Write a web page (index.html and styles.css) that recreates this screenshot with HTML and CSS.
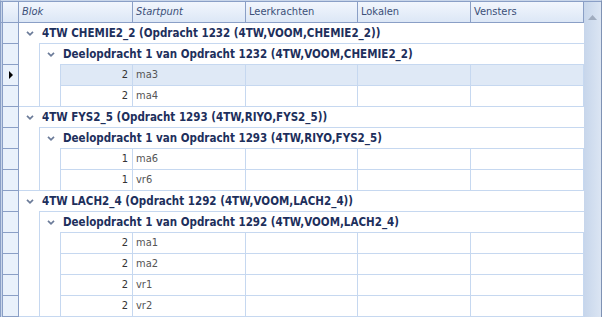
FILE: index.html
```html
<!DOCTYPE html>
<html lang="nl">
<head>
  <meta charset="UTF-8" />
  <title>Blokken</title>
  <link rel="stylesheet" href="styles.css">
</head>
<body>
  <div class="grid">
    <div class="main">
      <div class="head">
        <div class="hd ind"></div>
        <div class="hd c1 it">Blok</div>
        <div class="hd c2 it">Startpunt</div>
        <div class="hd c3">Leerkrachten</div>
        <div class="hd c4">Lokalen</div>
        <div class="hd c5">Vensters</div>
      </div>

      <div class="body">
        <div class="indicators">
          <div class="ic"></div>
          <div class="ic"></div>
          <div class="ic"><span class="arrow"></span></div>
          <div class="ic"></div>
          <div class="ic"></div>
          <div class="ic"></div>
          <div class="ic"></div>
          <div class="ic"></div>
          <div class="ic"></div>
          <div class="ic"></div>
          <div class="ic"></div>
          <div class="ic"></div>
          <div class="ic"></div>
          <div class="ic"></div>
        </div>

        <div class="rows">
          <div class="group">
            <div class="grow l1">
              <svg class="chev" width="8" height="5" viewBox="0 0 8 5"><polyline points="1,0.8 4,3.8 7,0.8" /></svg>
              <span>4TW CHEMIE2_2 (Opdracht 1232 (4TW,VOOM,CHEMIE2_2))</span>
            </div>
            <div class="sub">
              <div class="grow l2">
                <svg class="chev" width="8" height="5" viewBox="0 0 8 5"><polyline points="1,0.8 4,3.8 7,0.8" /></svg>
                <span>Deelopdracht 1 van Opdracht 1232 (4TW,VOOM,CHEMIE2_2)</span>
              </div>
              <div class="data">
                <div class="row sel">
                  <div class="c c1 num">2</div><div class="c c2">ma3</div><div class="c c3"></div><div class="c c4"></div><div class="c c5"></div>
                </div>
                <div class="row">
                  <div class="c c1 num">2</div><div class="c c2">ma4</div><div class="c c3"></div><div class="c c4"></div><div class="c c5"></div>
                </div>
              </div>
            </div>
          </div>

          <div class="group">
            <div class="grow l1">
              <svg class="chev" width="8" height="5" viewBox="0 0 8 5"><polyline points="1,0.8 4,3.8 7,0.8" /></svg>
              <span>4TW FYS2_5 (Opdracht 1293 (4TW,RIYO,FYS2_5))</span>
            </div>
            <div class="sub">
              <div class="grow l2">
                <svg class="chev" width="8" height="5" viewBox="0 0 8 5"><polyline points="1,0.8 4,3.8 7,0.8" /></svg>
                <span>Deelopdracht 1 van Opdracht 1293 (4TW,RIYO,FYS2_5)</span>
              </div>
              <div class="data">
                <div class="row">
                  <div class="c c1 num">1</div><div class="c c2">ma6</div><div class="c c3"></div><div class="c c4"></div><div class="c c5"></div>
                </div>
                <div class="row">
                  <div class="c c1 num">1</div><div class="c c2">vr6</div><div class="c c3"></div><div class="c c4"></div><div class="c c5"></div>
                </div>
              </div>
            </div>
          </div>

          <div class="group">
            <div class="grow l1">
              <svg class="chev" width="8" height="5" viewBox="0 0 8 5"><polyline points="1,0.8 4,3.8 7,0.8" /></svg>
              <span>4TW LACH2_4 (Opdracht 1292 (4TW,VOOM,LACH2_4))</span>
            </div>
            <div class="sub">
              <div class="grow l2">
                <svg class="chev" width="8" height="5" viewBox="0 0 8 5"><polyline points="1,0.8 4,3.8 7,0.8" /></svg>
                <span>Deelopdracht 1 van Opdracht 1292 (4TW,VOOM,LACH2_4)</span>
              </div>
              <div class="data">
                <div class="row">
                  <div class="c c1 num">2</div><div class="c c2">ma1</div><div class="c c3"></div><div class="c c4"></div><div class="c c5"></div>
                </div>
                <div class="row">
                  <div class="c c1 num">2</div><div class="c c2">ma2</div><div class="c c3"></div><div class="c c4"></div><div class="c c5"></div>
                </div>
                <div class="row">
                  <div class="c c1 num">2</div><div class="c c2">vr1</div><div class="c c3"></div><div class="c c4"></div><div class="c c5"></div>
                </div>
                <div class="row">
                  <div class="c c1 num">2</div><div class="c c2">vr2</div><div class="c c3"></div><div class="c c4"></div><div class="c c5"></div>
                </div>
              </div>
            </div>
          </div>
        </div>
      </div>
    </div>

    <div class="scroll">
      <svg class="up" width="9" height="5" viewBox="0 0 9 5"><polygon points="4.5,0 9,5 0,5" /></svg>
    </div>
  </div>
</body>
</html>
```

FILE: styles.css
```css
* {
  box-sizing: border-box;
}
body {
  margin: 0;
  background: #fff;
  font-family: "DejaVu Sans", sans-serif;
  font-stretch: condensed;
  font-size: 11px;
}
.grid {
  display: flex;
  width: 602px;
  height: 317px;
  border-left: 1px solid #8a9fc6;
  border-right: 1px solid #7f92b4;
  border-top: 1px solid #c9d6ea;
  overflow: hidden;
}
.main {
  width: 583px;
  display: flex;
  flex-direction: column;
}

/* header */
.head {
  display: flex;
  height: 22px;
  border-top: 1px solid #8a9fc6;
  border-bottom: 1px solid #8a9fc6;
  background: #c9d6ea;
}
.hd {
  height: 20px;
  line-height: 19px;
  padding-left: 3px;
  color: #3b4f78;
  background: linear-gradient(#f2f6fd, #dce7f6);
  border-right: 1px solid #8a9fc6;
  white-space: nowrap;
}
.hd.ind {
  width: 17px;
  margin-left: 1px;
  border-left: 1px solid #8a9fc6;
}
.it {
  font-style: italic;
}
.hd.c1 { width: 114px; }
.hd.c2 { width: 113px; }
.hd.c3 { width: 112px; }
.hd.c4 { width: 113px; }
.hd.c5 { width: 113px; }

/* body */
.body {
  display: flex;
  flex: 1;
}
.indicators {
  width: 18px;
  padding-left: 1px;
  background: #c9d6ea;
}
.ic {
  height: 21px;
  background: #e9f1fb;
  border-left: 1px solid #8a9fc6;
  border-right: 1px solid #8a9fc6;
  border-bottom: 1px solid #8a9fc6;
  display: flex;
  align-items: center;
  padding-left: 6px;
}
.arrow {
  width: 0;
  height: 0;
  border-top: 4px solid transparent;
  border-bottom: 4px solid transparent;
  border-left: 4px solid #000;
}
.rows {
  width: 565px;
}
.group {
  border-bottom: 1px solid #c6d8f0;
}
.grow {
  height: 20px;
  display: flex;
  align-items: center;
  font-size: 11.5px;
  font-weight: bold;
  color: #1d2f5c;
  white-space: nowrap;
}
.l1 {
  padding-left: 7px;
}
.l2 {
  padding-left: 7px;
}
.chev {
  margin-right: 8px;
  margin-top: 1px;
}
.chev polyline {
  fill: none;
  stroke: #6b7b99;
  stroke-width: 1.7;
}
.sub {
  margin-left: 20px;
  border-left: 1px solid #c6d8f0;
  border-top: 1px solid #c6d8f0;
}
.data {
  margin-left: 20px;
  border-left: 1px solid #c6d8f0;
  border-top: 1px solid #c6d8f0;
}
.row {
  display: flex;
  height: 21px;
  border-bottom: 1px solid #c6d8f0;
}
.row:last-child {
  height: 20px;
  border-bottom: none;
}
.row.sel {
  background: #dfe9f6;
}
.c {
  height: 100%;
  line-height: 20px;
  padding: 0 3px;
  border-right: 1px solid #c6d8f0;
  color: #555;
  font-weight: normal;
}
.c.c1 { width: 72px; }
.c.c2 { width: 113px; }
.c.c3 { width: 112px; }
.c.c4 { width: 113px; }
.c.c5 { width: 113px; }
.num {
  text-align: right;
  padding-right: 4px;
  color: #333;
}

/* scrollbar */
.scroll {
  width: 17px;
  border-top: 1px solid #8a9fc6;
  background: linear-gradient(90deg, #c7d6eb, #dbe5f3);
  padding: 8px 0 0 4px;
}
.up polygon {
  fill: #a0acbf;
}
```
